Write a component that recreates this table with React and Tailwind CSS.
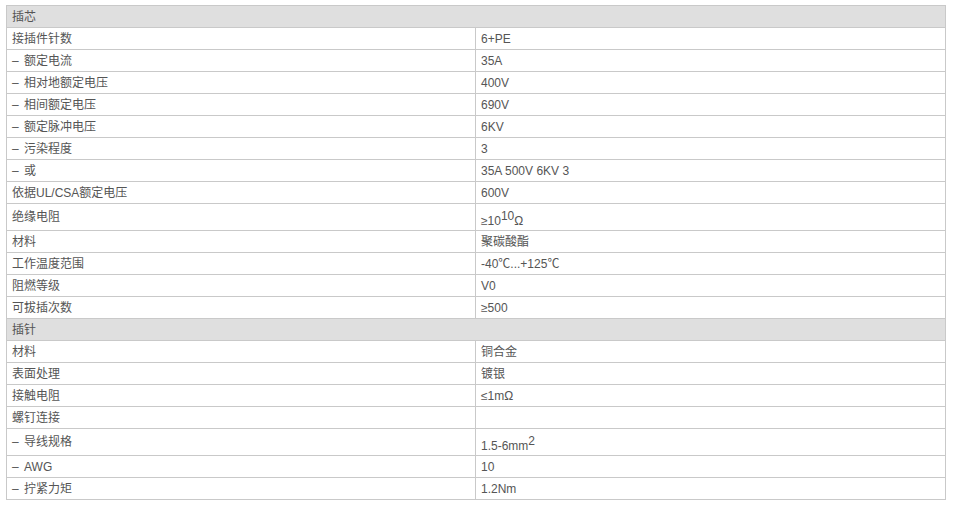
import React from "react";

const Dash = ({ children }) => (
  <>
    <span className="inline-block w-[12px]">–</span>
    {children}
  </>
);

const rows = [
  { section: "插芯" },
  { label: "接插件针数", value: "6+PE" },
  { label: <Dash>额定电流</Dash>, value: "35A" },
  { label: <Dash>相对地额定电压</Dash>, value: "400V" },
  { label: <Dash>相间额定电压</Dash>, value: "690V" },
  { label: <Dash>额定脉冲电压</Dash>, value: "6KV" },
  { label: <Dash>污染程度</Dash>, value: "3" },
  { label: <Dash>或</Dash>, value: "35A 500V 6KV 3" },
  { label: "依据UL/CSA额定电压", value: "600V" },
  {
    label: "绝缘电阻",
    tall: true,
    value: (
      <>
        ≥10<sup className="text-[12px] relative -top-[5px]">10</sup>Ω
      </>
    ),
  },
  { label: "材料", value: "聚碳酸酯" },
  { label: "工作温度范围", value: "-40℃...+125℃" },
  { label: "阻燃等级", value: "V0" },
  { label: "可拔插次数", value: "≥500" },
  { section: "插针" },
  { label: "材料", value: "铜合金" },
  { label: "表面处理", value: "镀银" },
  { label: "接触电阻", value: "≤1mΩ" },
  { label: "螺钉连接", value: "" },
  {
    label: <Dash>导线规格</Dash>,
    tall: true,
    value: (
      <>
        1.5-6mm<sup className="text-[12px] relative -top-[5px]">2</sup>
      </>
    ),
  },
  { label: <Dash>AWG</Dash>, value: "10" },
  { label: <Dash>拧紧力矩</Dash>, value: "1.2Nm" },
];

export default function App() {
  return (
    <div
      className="w-[953px] h-[509px] bg-white pl-[6px] pt-[5px] text-[12px] text-[#555]"
      style={{ fontFamily: '"Liberation Sans", Arial, "Noto Sans CJK SC", sans-serif' }}
    >
      <table className="w-[940px] border-collapse table-fixed">
        <colgroup>
          <col className="w-[469px]" />
          <col />
        </colgroup>
        <tbody>
          {rows.map((row, i) =>
            row.section ? (
              <tr key={i} className="bg-[#dfdfdf]">
                <td colSpan={2} className="h-[22px] border border-[#c9c9c9] px-[5px] py-0 leading-[14px]">
                  {row.section}
                </td>
              </tr>
            ) : (
              <tr key={i}>
                <td
                  className={`${row.tall ? "h-[27px]" : "h-[22px]"} border border-[#c9c9c9] px-[5px] py-0 leading-[14px]`}
                >
                  {row.label}
                </td>
                <td
                  className={`${row.tall ? "h-[27px] pt-[8px] pb-0" : "h-[22px] py-0"} border border-[#c9c9c9] px-[5px] leading-[14px]`}
                >
                  {row.value}
                </td>
              </tr>
            )
          )}
        </tbody>
      </table>
    </div>
  );
}
